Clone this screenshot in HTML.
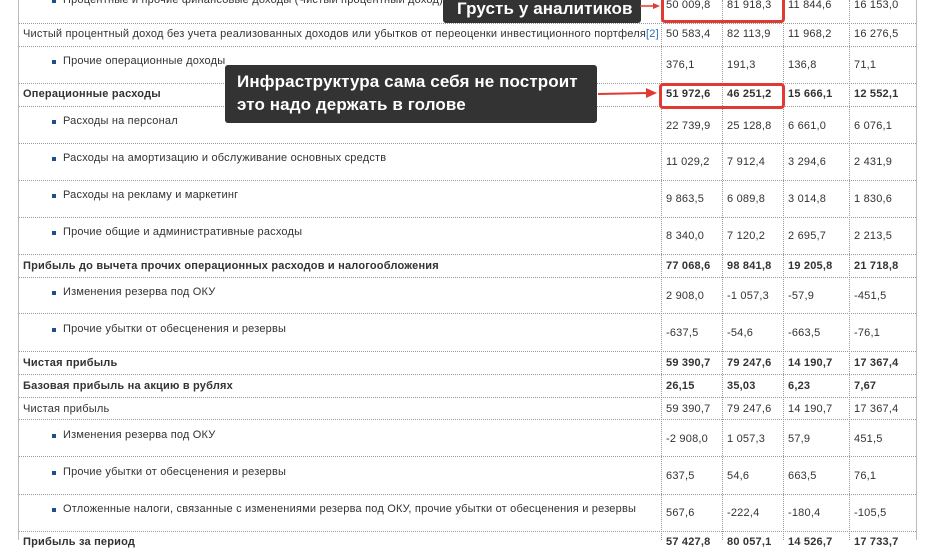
<!DOCTYPE html>
<html><head><meta charset="utf-8"><style>
body{margin:0;width:938px;height:540px;overflow:hidden;background:#fff;font-family:"Liberation Sans",sans-serif;color:#333;font-size:11px;letter-spacing:0.2px;position:relative}
.vl{position:absolute;top:0;height:540px;width:0;border-left:1px dotted #999}
.hl{position:absolute;left:19px;width:897px;height:0;border-top:1px dotted #999}
.t{position:absolute;white-space:nowrap;line-height:13px}
.b{font-weight:bold}
.bul{position:absolute;width:4px;height:4px;background:#1f4e8c}
.box{position:absolute;background:#333;color:#fff;border-radius:3px;font-size:17px;font-weight:bold;line-height:23px;padding:0 12px;box-sizing:border-box;letter-spacing:0.1px;white-space:nowrap}
.red{position:absolute;border:3px solid #e03a34;border-radius:4px;box-sizing:border-box}
</style></head><body>
<div style="position:absolute;left:18px;top:0;width:1px;height:540px;background:#bbb"></div>
<div style="position:absolute;left:916px;top:0;width:1px;height:540px;background:#bbb"></div>
<div class="vl" style="left:661px"></div><div class="vl" style="left:722px"></div><div class="vl" style="left:783px"></div><div class="vl" style="left:849px"></div>

<div class="hl" style="top:23px"></div><div class="hl" style="top:46px"></div><div class="hl" style="top:83px"></div><div class="hl" style="top:106px"></div><div class="hl" style="top:143px"></div><div class="hl" style="top:180px"></div><div class="hl" style="top:217px"></div><div class="hl" style="top:254px"></div><div class="hl" style="top:277px"></div><div class="hl" style="top:313px"></div><div class="hl" style="top:351px"></div><div class="hl" style="top:374px"></div><div class="hl" style="top:397px"></div><div class="hl" style="top:419px"></div><div class="hl" style="top:456px"></div><div class="hl" style="top:494px"></div><div class="hl" style="top:531px"></div>

<div class="bul" style="left:52px;top:-1px"></div><div class="t" style="left:63px;top:-6px">Процентные и прочие финансовые доходы (Чистый процентный доход)</div>
<div class="t" style="left:666px;top:-1px">50 009,8</div><div class="t" style="left:727px;top:-1px">81 918,3</div><div class="t" style="left:788px;top:-1px">11 844,6</div><div class="t" style="left:854px;top:-1px">16 153,0</div>
<div class="t" style="left:23px;top:28px">Чистый процентный доход без учета реализованных доходов или убытков от переоценки инвестиционного портфеля<span style="color:#2a6ebb">[2]</span></div>
<div class="t" style="left:666px;top:28px">50 583,4</div><div class="t" style="left:727px;top:28px">82 113,9</div><div class="t" style="left:788px;top:28px">11 968,2</div><div class="t" style="left:854px;top:28px">16 276,5</div>
<div class="bul" style="left:52px;top:60px"></div><div class="t" style="left:63px;top:55px">Прочие операционные доходы</div>
<div class="t" style="left:666px;top:59px">376,1</div><div class="t" style="left:727px;top:59px">191,3</div><div class="t" style="left:788px;top:59px">136,8</div><div class="t" style="left:854px;top:59px">71,1</div>
<div class="t b" style="left:23px;top:88px">Операционные расходы</div>
<div class="t b" style="left:666px;top:88px">51 972,6</div><div class="t b" style="left:727px;top:88px">46 251,2</div><div class="t b" style="left:788px;top:88px">15 666,1</div><div class="t b" style="left:854px;top:88px">12 552,1</div>
<div class="bul" style="left:52px;top:120px"></div><div class="t" style="left:63px;top:115px">Расходы на персонал</div>
<div class="t" style="left:666px;top:120px">22 739,9</div><div class="t" style="left:727px;top:120px">25 128,8</div><div class="t" style="left:788px;top:120px">6 661,0</div><div class="t" style="left:854px;top:120px">6 076,1</div>
<div class="bul" style="left:52px;top:157px"></div><div class="t" style="left:63px;top:152px">Расходы на амортизацию и обслуживание основных средств</div>
<div class="t" style="left:666px;top:156px">11 029,2</div><div class="t" style="left:727px;top:156px">7 912,4</div><div class="t" style="left:788px;top:156px">3 294,6</div><div class="t" style="left:854px;top:156px">2 431,9</div>
<div class="bul" style="left:52px;top:194px"></div><div class="t" style="left:63px;top:189px">Расходы на рекламу и маркетинг</div>
<div class="t" style="left:666px;top:193px">9 863,5</div><div class="t" style="left:727px;top:193px">6 089,8</div><div class="t" style="left:788px;top:193px">3 014,8</div><div class="t" style="left:854px;top:193px">1 830,6</div>
<div class="bul" style="left:52px;top:231px"></div><div class="t" style="left:63px;top:226px">Прочие общие и административные расходы</div>
<div class="t" style="left:666px;top:230px">8 340,0</div><div class="t" style="left:727px;top:230px">7 120,2</div><div class="t" style="left:788px;top:230px">2 695,7</div><div class="t" style="left:854px;top:230px">2 213,5</div>
<div class="t b" style="left:23px;top:260px">Прибыль до вычета прочих операционных расходов и налогообложения</div>
<div class="t b" style="left:666px;top:260px">77 068,6</div><div class="t b" style="left:727px;top:260px">98 841,8</div><div class="t b" style="left:788px;top:260px">19 205,8</div><div class="t b" style="left:854px;top:260px">21 718,8</div>
<div class="bul" style="left:52px;top:291px"></div><div class="t" style="left:63px;top:286px">Изменения резерва под ОКУ</div>
<div class="t" style="left:666px;top:290px">2 908,0</div><div class="t" style="left:727px;top:290px">-1 057,3</div><div class="t" style="left:788px;top:290px">-57,9</div><div class="t" style="left:854px;top:290px">-451,5</div>
<div class="bul" style="left:52px;top:328px"></div><div class="t" style="left:63px;top:323px">Прочие убытки от обесценения и резервы</div>
<div class="t" style="left:666px;top:327px">-637,5</div><div class="t" style="left:727px;top:327px">-54,6</div><div class="t" style="left:788px;top:327px">-663,5</div><div class="t" style="left:854px;top:327px">-76,1</div>
<div class="t b" style="left:23px;top:357px">Чистая прибыль</div>
<div class="t b" style="left:666px;top:357px">59 390,7</div><div class="t b" style="left:727px;top:357px">79 247,6</div><div class="t b" style="left:788px;top:357px">14 190,7</div><div class="t b" style="left:854px;top:357px">17 367,4</div>
<div class="t b" style="left:23px;top:380px">Базовая прибыль на акцию в рублях</div>
<div class="t b" style="left:666px;top:380px">26,15</div><div class="t b" style="left:727px;top:380px">35,03</div><div class="t b" style="left:788px;top:380px">6,23</div><div class="t b" style="left:854px;top:380px">7,67</div>
<div class="t" style="left:23px;top:403px">Чистая прибыль</div>
<div class="t" style="left:666px;top:403px">59 390,7</div><div class="t" style="left:727px;top:403px">79 247,6</div><div class="t" style="left:788px;top:403px">14 190,7</div><div class="t" style="left:854px;top:403px">17 367,4</div>
<div class="bul" style="left:52px;top:434px"></div><div class="t" style="left:63px;top:429px">Изменения резерва под ОКУ</div>
<div class="t" style="left:666px;top:433px">-2 908,0</div><div class="t" style="left:727px;top:433px">1 057,3</div><div class="t" style="left:788px;top:433px">57,9</div><div class="t" style="left:854px;top:433px">451,5</div>
<div class="bul" style="left:52px;top:471px"></div><div class="t" style="left:63px;top:466px">Прочие убытки от обесценения и резервы</div>
<div class="t" style="left:666px;top:470px">637,5</div><div class="t" style="left:727px;top:470px">54,6</div><div class="t" style="left:788px;top:470px">663,5</div><div class="t" style="left:854px;top:470px">76,1</div>
<div class="bul" style="left:52px;top:508px"></div><div class="t" style="left:63px;top:503px">Отложенные налоги, связанные с изменениями резерва под ОКУ, прочие убытки от обесценения и резервы</div>
<div class="t" style="left:666px;top:507px">567,6</div><div class="t" style="left:727px;top:507px">-222,4</div><div class="t" style="left:788px;top:507px">-180,4</div><div class="t" style="left:854px;top:507px">-105,5</div>
<div class="t b" style="left:23px;top:536px">Прибыль за период</div>
<div class="t b" style="left:666px;top:536px">57 427,8</div><div class="t b" style="left:727px;top:536px">80 057,1</div><div class="t b" style="left:788px;top:536px">14 526,7</div><div class="t b" style="left:854px;top:536px">17 733,7</div>

<div class="red" style="left:661px;top:-6px;width:124px;height:29px"></div>
<div class="red" style="left:659px;top:83px;width:126px;height:26px"></div>
<div class="box" style="left:443px;top:-5px;width:198px;height:28px;padding-top:2px;padding-left:14px">Грусть у аналитиков</div>
<div class="box" style="left:225px;top:65px;width:372px;height:58px;padding-top:5px">Инфраструктура сама себя не построит<br>это надо держать в голове</div>
<svg style="position:absolute;left:0;top:0" width="938" height="540">
<line x1="640" y1="6" x2="655" y2="6" stroke="#e03a34" stroke-width="1.5"/><polygon points="660,6 653,3 653,9" fill="#e03a34"/>
<line x1="598" y1="94" x2="648" y2="93" stroke="#e03a34" stroke-width="2"/><polygon points="657,93 646,88 646,98" fill="#e03a34"/>
</svg>
</body></html>
